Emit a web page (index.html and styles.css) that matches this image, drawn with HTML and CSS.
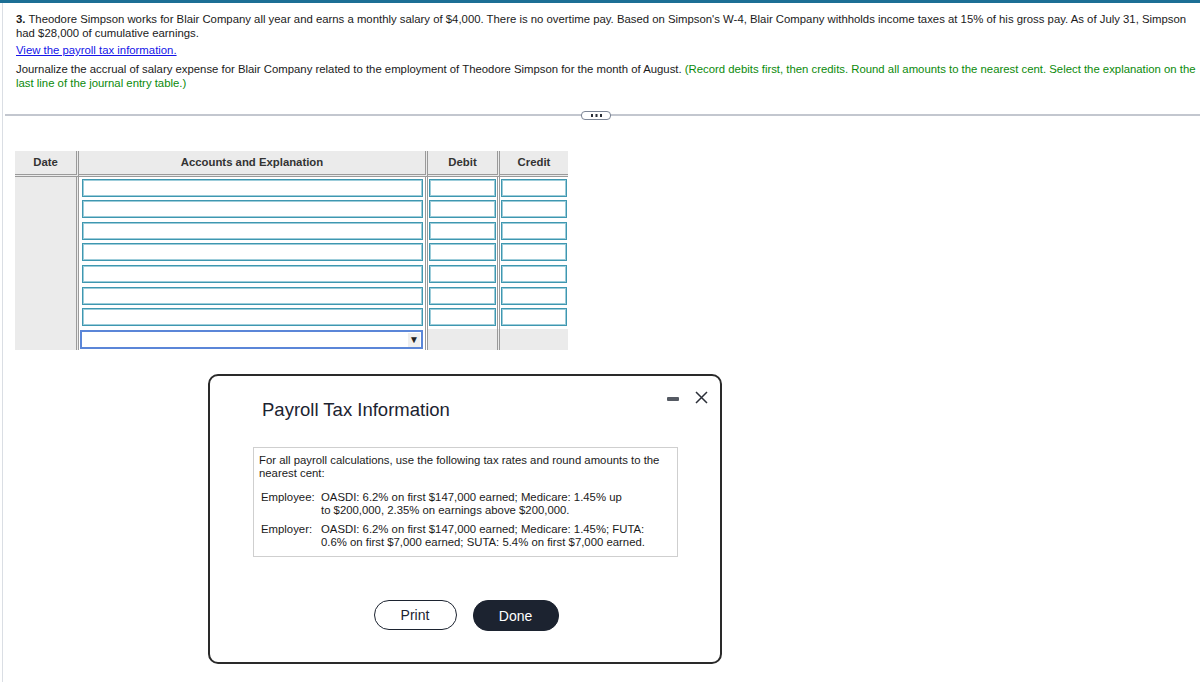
FILE: index.html
```html
<!DOCTYPE html>
<html lang="en">
<head>
<meta charset="utf-8">
<title>Payroll Journal</title>
<link rel="stylesheet" href="styles.css">
</head>
<body>
<div class="topbar"></div>
<div class="page">
  <div class="question">
    <p class="q"><b>3.</b> Theodore Simpson works for Blair Company all year and earns a monthly salary of $4,000. There is no overtime pay. Based on Simpson's W-4, Blair Company withholds income taxes at 15% of his gross pay. As of July 31, Simpson had $28,000 of cumulative earnings.</p>
    <p class="link"><a href="#">View the payroll tax information.</a></p>
    <p class="instr">Journalize the accrual of salary expense for Blair Company related to the employment of Theodore Simpson for the month of August. <span class="green">(Record debits first, then credits. Round all amounts to the nearest cent. Select the explanation on the last line of the journal entry table.)</span></p>
  </div>

  <div class="divider">
    <span class="handle"><svg width="13" height="3" viewBox="0 0 13 3"><rect x="1" y="0" width="2" height="3" fill="#2b2f38"/><rect x="5.5" y="0" width="2" height="3" fill="#2b2f38"/><rect x="10" y="0" width="2" height="3" fill="#2b2f38"/></svg></span>
  </div>

  <div class="journal">
    <div class="hcell sep">Date</div>
    <div class="hcell sep">Accounts and Explanation</div>
    <div class="hcell sep">Debit</div>
    <div class="hcell">Credit</div>

    <div class="datecol sep"></div>

    <div class="cell acct sep"><span class="inp"></span></div>
    <div class="cell amt sep"><span class="inp"></span></div>
    <div class="cell amt"><span class="inp"></span></div>

    <div class="cell acct sep"><span class="inp"></span></div>
    <div class="cell amt sep"><span class="inp"></span></div>
    <div class="cell amt"><span class="inp"></span></div>

    <div class="cell acct sep"><span class="inp"></span></div>
    <div class="cell amt sep"><span class="inp"></span></div>
    <div class="cell amt"><span class="inp"></span></div>

    <div class="cell acct sep"><span class="inp"></span></div>
    <div class="cell amt sep"><span class="inp"></span></div>
    <div class="cell amt"><span class="inp"></span></div>

    <div class="cell acct sep"><span class="inp"></span></div>
    <div class="cell amt sep"><span class="inp"></span></div>
    <div class="cell amt"><span class="inp"></span></div>

    <div class="cell acct sep"><span class="inp"></span></div>
    <div class="cell amt sep"><span class="inp"></span></div>
    <div class="cell amt"><span class="inp"></span></div>

    <div class="cell acct sep"><span class="inp"></span></div>
    <div class="cell amt sep"><span class="inp"></span></div>
    <div class="cell amt"><span class="inp"></span></div>

    <div class="cell acct sep"><span class="sel"><span class="arrow">&#9660;</span></span></div>
    <div class="cell empty sep"></div>
    <div class="cell empty"></div>
  </div>
</div>

<div class="modal">
  <div class="modal-head">
    <h2 class="modal-title">Payroll Tax Information</h2>
    <div class="controls">
      <span class="minimize"></span>
      <svg class="close" width="13" height="13" viewBox="0 0 13 13"><path d="M1 1 L12 12 M12 1 L1 12" stroke="#2b2f38" stroke-width="1.5" fill="none"/></svg>
    </div>
  </div>
  <div class="infobox">
    <p class="intro">For all payroll calculations, use the following tax rates and round amounts to the<br>nearest cent:</p>
    <div class="rates">
      <span class="lbl">Employee:</span>
      <span class="val">OASDI: 6.2% on first $147,000 earned; Medicare: 1.45% up<br>to $200,000, 2.35% on earnings above $200,000.</span>
      <span class="lbl">Employer:</span>
      <span class="val">OASDI: 6.2% on first $147,000 earned; Medicare: 1.45%; FUTA:<br>0.6% on first $7,000 earned; SUTA: 5.4% on first $7,000 earned.</span>
    </div>
  </div>
  <div class="buttons">
    <button class="btn print">Print</button>
    <button class="btn done">Done</button>
  </div>
</div>
</body>
</html>
```

FILE: styles.css
```css
* { box-sizing: border-box; }

html, body {
  margin: 0;
  padding: 0;
  background: #ffffff;
}

body {
  font-family: "Liberation Sans", Arial, Helvetica, sans-serif;
  font-size: 11.35px;
  color: #1a1a1a;
  width: 1200px;
  height: 682px;
  overflow: hidden;
  position: relative;
}

.topbar {
  height: 3px;
  background: #1c6f95;
}

.page {
  margin-left: 2px;
  border-left: 1px solid #dadee4;
  height: 679px;
}

.question {
  padding: 9px 3px 0 13px;
}

.question p {
  margin: 0;
  line-height: 14px;
}

.question .link {
  margin-top: 3px;
}

.question .link a {
  color: #1515e8;
  text-decoration: underline;
}

.question .instr {
  margin-top: 5px;
}

.green {
  color: #0a8a0a;
}

.divider {
  margin: 20px 0 0 2px;
  height: 10px;
  display: flex;
  align-items: center;
  background: linear-gradient(#c3c7cf, #c3c7cf) 0 4px / 100% 2px no-repeat;
}

.handle {
  margin-left: 576px;
  width: 30px;
  height: 9px;
  border: 1px solid #7d8696;
  border-radius: 4px;
  background: #fff;
  display: flex;
  align-items: center;
  justify-content: center;
}

.handle svg { display: block; }

.journal {
  margin: 31px 0 0 12px;
  display: grid;
  grid-template-columns: 64px 349px 72px 68px;
  grid-template-rows: 26px repeat(8, 21.67px);
  width: 553px;
}

.hcell {
  background: #ebebeb;
  border-bottom: 3px double #9a9a9a;
  font-weight: bold;
  color: #333;
  text-align: center;
  line-height: 23px;
  font-size: 11.35px;
}

.sep {
  border-right: 3px double #9a9a9a;
}

.datecol {
  grid-column: 1;
  grid-row: 2 / span 8;
  background: #ebebeb;
}

.cell {
  background: #fff;
  padding-top: 1.5px;
}

.cell.acct {
  padding-left: 3px;
  padding-right: 2px;
}

.cell.amt {
  padding-left: 1px;
  padding-right: 1px;
}

.cell.empty {
  background: #ebebeb;
}

.inp {
  display: block;
  height: 18px;
  border: 1px solid #3f97b0;
  box-shadow: inset 0 0 0 1px #9dcdda;
  background: #fff;
}

.sel {
  display: flex;
  align-items: center;
  justify-content: flex-end;
  height: 19px;
  margin-left: -2px;
  border: 2px solid #5b86d8;
  background: #fff;
  padding-right: 1px;
}

.arrow {
  font-size: 10px;
  color: #222;
  line-height: 14px;
  width: 12px;
  text-align: center;
  background: #efefef;
}

/* Modal overlay */
.modal {
  position: absolute;
  left: 208px;
  top: 374px;
  width: 514px;
  height: 290px;
  border: 2px solid #2a2a2a;
  border-radius: 10px;
  background: #fff;
}

.modal-head {
  display: flex;
  justify-content: space-between;
  align-items: flex-start;
  padding: 15px 12px 0 52px;
}

.modal-title {
  margin: 8px 0 0;
  font-size: 18.5px;
  font-weight: normal;
  line-height: 22px;
  color: #1c2330;
}

.controls {
  display: flex;
  align-items: flex-start;
  gap: 16px;
}

.minimize {
  display: block;
  width: 12px;
  height: 4px;
  margin-top: 6px;
  background: #555a63;
  border-radius: 1px;
}

.close { display: block; }

.infobox {
  margin: 26px 0 0 43px;
  width: 425px;
  height: 110px;
  border: 1px solid #cfcfcf;
  padding: 6px 5px 0 5px;
  font-size: 11.35px;
  color: #1a1a1a;
}

.infobox p {
  margin: 0;
  line-height: 13px;
}

.rates {
  margin-top: 10.5px;
  display: grid;
  grid-template-columns: 61px 1fr;
  row-gap: 6px;
  line-height: 13px;
}

.rates .lbl {
  padding-left: 2px;
}

.rates .val {
  padding-left: 1px;
}

.buttons {
  margin-top: 43px;
  display: flex;
  justify-content: center;
  gap: 16px;
  padding-left: 2px;
}

.btn {
  font-family: "Liberation Sans", Arial, Helvetica, sans-serif;
  font-size: 14px;
  height: 30px;
  border-radius: 15px;
  cursor: pointer;
}

.print {
  width: 83px;
  background: #fff;
  color: #1c2330;
  border: 1.5px solid #1c2330;
}

.done {
  width: 86px;
  height: 31px;
  background: #1c2330;
  color: #fff;
  border: 1.5px solid #1c2330;
}
```
